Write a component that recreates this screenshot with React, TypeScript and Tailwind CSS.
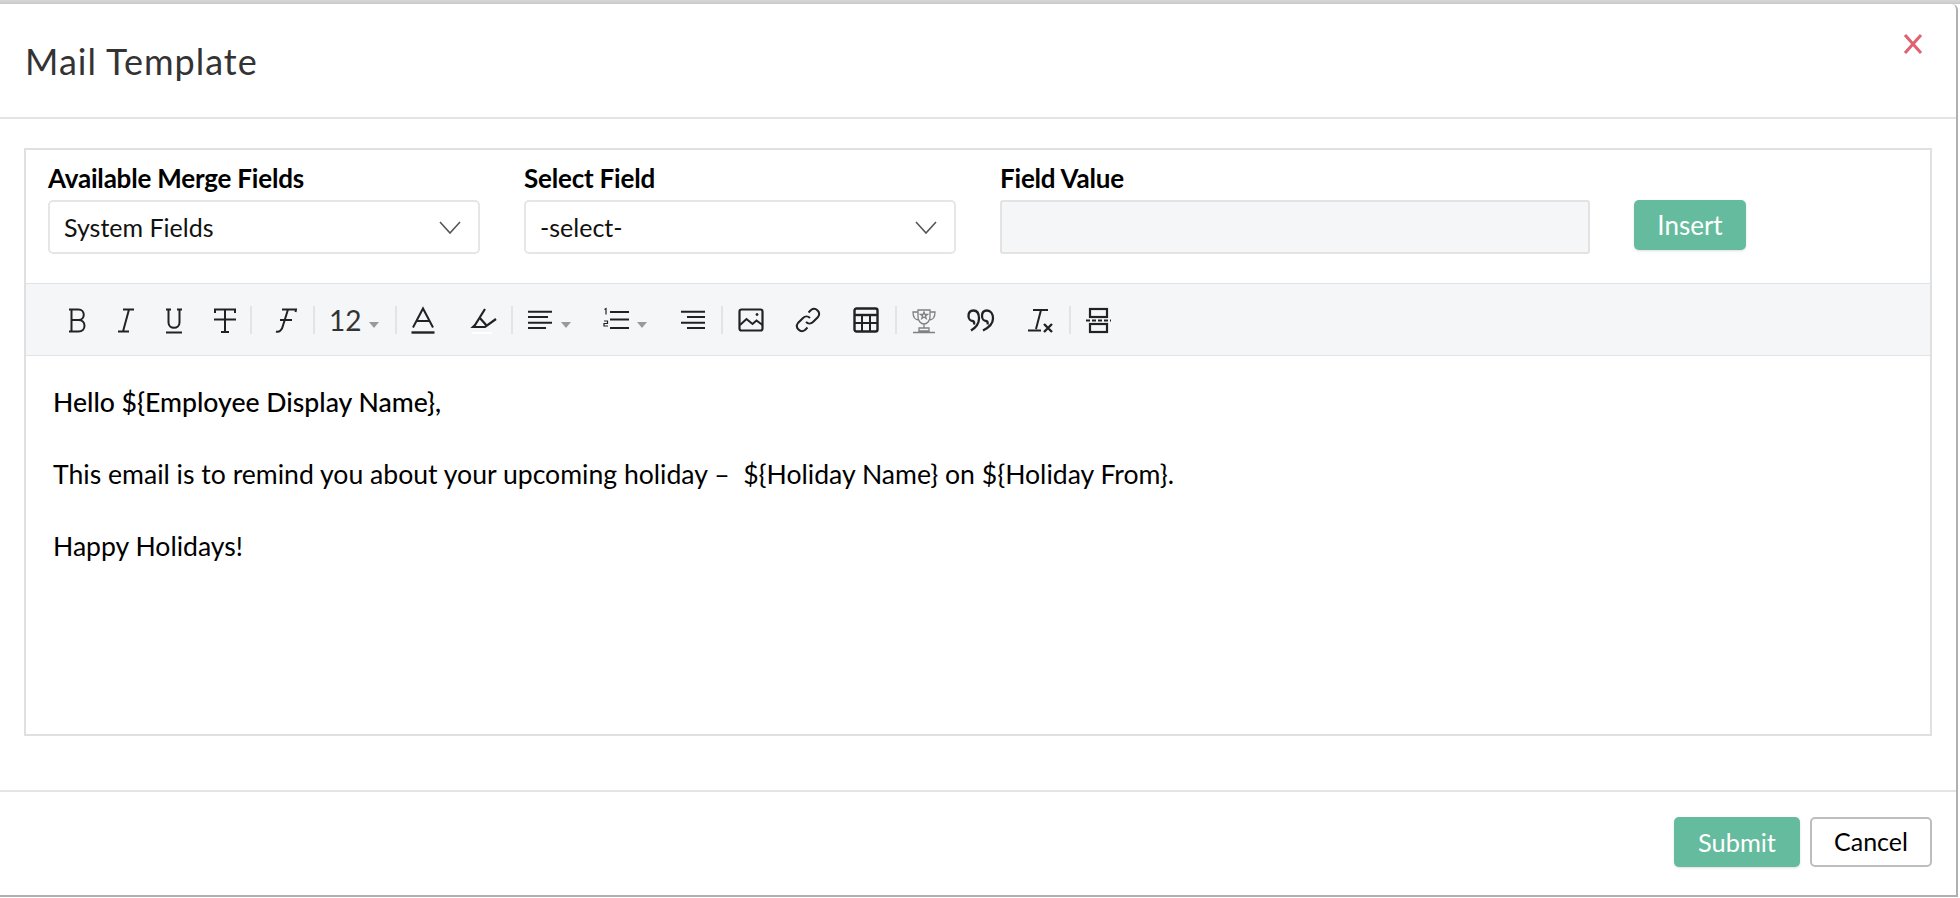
import type { ReactNode } from "react";

const Sep = () => <span className="w-[2px] h-[28px] bg-[#e3e4e7] shrink-0" />;

const Caret = () => (
    <svg width="10" height="6" viewBox="0 0 10 6" className="mt-[10px]">
        <path d="M0 0h10L5 6z" fill="#9a9a9a" />
    </svg>
);

function Icon({ children, className }: { children: ReactNode; className?: string }) {
    return (
        <svg width="28" height="28" viewBox="0 0 28 28" fill="none" stroke="#222" strokeWidth="2" className={className}>
            {children}
        </svg>
    );
}

function Toolbar() {
    return (
        <div className="h-[73px] bg-[#f5f6f8] border-y border-[#e2e3e5] flex items-center pl-[27px] text-[#333]">
            <div className="w-[48px] flex justify-center">
                <Icon>
                    <path d="M6 3.500h3M6 25.500h3M8.500 3.500v22M8.500 3.500h7c7 0 7 10.500 0 10.500h-7M15.500 14c8 0 8 11.500 0 11.500h-7" />
                </Icon>
            </div>
            <div className="w-[48px] flex justify-center">
                <Icon>
                    <path d="M12 3.500h11M7 25.500h11M18 3.500l-6 22" />
                </Icon>
            </div>
            <div className="w-[50px] flex justify-center">
                <Icon>
                    <path d="M6 3.500h5M17 3.500h5M8.500 3.500v13c0 7 11 7 11 0v-13M6 26.500h16" />
                </Icon>
            </div>
            <div className="w-[51px] flex justify-center">
                <Icon>
                    <path d="M4 7V3.500h20V7M3 13.500h22M14 3.500v22.500M10 26h8" />
                </Icon>
            </div>
            <Sep />
            <div className="w-[61px] flex justify-center pl-[5px]">
                <Icon>
                    <path d="M11 3.500h14l-.5 2.500M9 14h12M17 3.500l-5 16c-1 5-4 7-7 6" />
                </Icon>
            </div>
            <Sep />
            <div className="w-[80px] flex items-center pl-[14px] gap-[8px]">
                <span className="text-[28px] text-[#333] leading-none">12</span>
                <Caret />
            </div>
            <Sep />
            <div className="w-[52px] flex justify-center">
                <Icon>
                    <path d="M4 21.500L14 2.500l10 19M7.500 15h13" />
                    <path d="M2.500 26.500h23" strokeWidth="2.400" />
                </Icon>
            </div>
            <div className="w-[62px] flex justify-center pl-[8px]">
                <Icon>
                    <path d="M15 3L5 19l-2 2h12l11-8M9 11l8 9" strokeWidth="2.200" />
                    <path d="M2 27h20" stroke="#fff" strokeWidth="2" />
                </Icon>
            </div>
            <Sep />
            <div className="w-[88px] flex items-center pl-[13px] gap-[7px]">
                <Icon>
                    <path d="M2 5.700h24M2 11h20M2 16.700h24M2 22h18" />
                </Icon>
                <Caret />
            </div>
            <div className="w-[69px] flex items-center pl-[1px] gap-[7px]">
                <Icon>
                    <path d="M8 6h19M8 13.500h19M8 22h19" strokeWidth="2.200" />
                    <path d="M2.500 3.500l1.500-1v6M2 15h3.500v2.500H2v2.500h4" strokeWidth="1.200" />
                </Icon>
                <Caret />
            </div>
            <div className="w-[51px] flex justify-center pr-[5px]">
                <Icon>
                    <path d="M2 5.700h24M8 11h18M2 16.700h24M8 22h18" />
                </Icon>
            </div>
            <Sep />
            <div className="w-[56px] flex justify-center">
                <Icon>
                    <rect x="2.500" y="3.500" width="23" height="21" rx="2" strokeWidth="2.200" />
                    <path d="M3 19l6.500-6 6 5 4-3.500 6 4.500" />
                    <circle cx="20" cy="8.500" r="1" fill="#222" strokeWidth="1" />
                </Icon>
            </div>
            <div className="w-[58px] flex justify-center">
                <Icon>
                    <path d="M12 16a5 5 0 0 0 7 0l5-5a5 5 0 0 0-7-7l-2.500 2.500" />
                    <path d="M16 12a5 5 0 0 0-7 0l-5 5a5 5 0 0 0 7 7l2.500-2.500" />
                </Icon>
            </div>
            <div className="w-[58px] flex justify-center">
                <Icon>
                    <rect x="2.500" y="2.500" width="23" height="23" rx="2" strokeWidth="2.400" />
                    <path d="M3 9h22" strokeWidth="2.400" />
                    <path d="M3 17h22M10 9v16M18 9v16" />
                </Icon>
            </div>
            <Sep />
            <div className="w-[54px] flex justify-center">
                <Icon>
                    <g stroke="#808080" strokeWidth="1.300">
                        <path d="M8 4h12v7c0 4-3 7-6 7s-6-3-6-7zM8 6H3c0 5 2 8 6 8M20 6h5c0 5-2 8-6 8M14 18v4M9 22h10v3H9zM3 26.500h22" />
                        <path d="M14 6l1 2.500h2.500l-2 1.500.7 2.500-2.200-1.500-2.200 1.500.7-2.500-2-1.500H13z" />
                    </g>
                </Icon>
            </div>
            <div className="w-[60px] flex justify-center">
                <Icon>
                    <path d="M4 24.500c5-3 8-7 8-12 0-5-2-8-5.500-8-3 0-5 2-5 5.500 0 3 2 5 4 5 1.500 0 2 1.500 1.500 3.500" strokeWidth="2.300" />
                    <path d="M16 24.500c6-3 10-7 10-12 0-5-2.500-8-6-8-3 0-5 2-5 5.500 0 3 2 5 4 5 1.500 0 2 1.500 1.500 3.500" strokeWidth="2.300" />
                </Icon>
            </div>
            <div className="w-[58px] flex justify-center">
                <Icon>
                    <path d="M7 4h15M15 4l-5 19M2 24.500h13" />
                    <path d="M18 18l8 8M26 18l-8 8" strokeWidth="2.400" />
                </Icon>
            </div>
            <Sep />
            <div className="w-[54px] flex justify-center">
                <Icon>
                    <rect x="6" y="3" width="17" height="8" strokeWidth="2.200" />
                    <rect x="6" y="18" width="17" height="8" strokeWidth="2.200" />
                    <path d="M2 14.500h25" strokeDasharray="4 2" />
                </Icon>
            </div>
        </div>
    );
}

function Chevron() {
    return (
        <svg width="22" height="13" viewBox="0 0 22 13" fill="none" stroke="#555" strokeWidth="1.600">
            <path d="M1 1l10 11L21 1" />
        </svg>
    );
}

function Field({ label, value, className }: { label: string; value: string; className: string }) {
    return (
        <div className={className}>
            <label className="block text-[26px] leading-[28px] font-bold text-black mb-[8px] tracking-[-0.2px]">{label}</label>
            <div className="h-[54px] bg-white border-2 border-[#e6e6e6] rounded-[5px] flex items-center justify-between pl-[14px] pr-[17px]">
                <span className="text-[25px] text-[#111] mt-[1px]">{value}</span>
                <Chevron />
            </div>
        </div>
    );
}

export default function App() {
    return (
        <div className="w-[1960px] h-[898px] bg-white overflow-hidden font-['Lato',sans-serif]">
            <div className="h-[4px] bg-gradient-to-b from-[#d8d8d8] to-[#c8c8c8]" />
            <div className="w-[1958px] h-[893px] bg-white rounded-tr-[6px] border-r-2 border-b-2 border-[#b0b0b0] flex flex-col">
                <header className="relative h-[115px] border-b-2 border-[#e4e4e4] shrink-0 flex items-center pl-[25px]">
                    <h1 className="text-[36px] text-[#333] tracking-[1px] mt-[1px]">Mail Template</h1>
                    <svg width="20" height="20" viewBox="0 0 20 20" className="absolute right-[33px] top-[30px]">
                        <path d="M2 1l16 18M18 1L2 19" stroke="#e0616f" strokeWidth="3" />
                    </svg>
                </header>
                <div className="flex-1 pl-[24px] pr-[24px] pt-[29px]">
                    <div className="h-[588px] border-2 border-[#dfe0e1] flex flex-col">
                        <div className="h-[133px] flex pl-[22px] pt-[14px] shrink-0">
                            <Field label="Available Merge Fields" value="System Fields" className="w-[432px]" />
                            <Field label="Select Field" value="-select-" className="w-[432px] ml-[44px]" />
                            <div className="w-[590px] ml-[44px]">
                                <label className="block text-[26px] leading-[28px] font-bold text-black mb-[8px] tracking-[-0.2px]">Field Value</label>
                                <input disabled className="w-full h-[54px] bg-[#f5f6f8] border-2 border-[#e3e3e3] rounded-[3px]" />
                            </div>
                            <button className="ml-[44px] mt-[36px] w-[112px] h-[50px] bg-[#65bb9d] text-white text-[26px] rounded-[5px] shadow-sm">Insert</button>
                        </div>
                        <Toolbar />
                        <div className="flex-1 pl-[27px] pt-[28px] text-[26.6px] leading-[36px] text-black">
                            <p className="font-medium">Hello {"${Employee Display Name}"},</p>
                            <p className="mt-[36px]">This email is to remind you about your upcoming holiday –&nbsp; {"${Holiday Name}"} on {"${Holiday From}"}.</p>
                            <p className="mt-[36px]">Happy Holidays!</p>
                        </div>
                    </div>
                </div>
                <footer className="h-[105px] border-t-2 border-[#e4e4e4] flex justify-end items-start pt-[25px] pr-[24px] gap-[10px] shrink-0">
                    <button className="w-[126px] h-[50px] bg-[#65bb9d] text-white text-[25.400px] rounded-[5px] shadow-sm">Submit</button>
                    <button className="w-[122px] h-[50px] bg-white text-black text-[25px] border-2 border-[#bdbdbd] rounded-[5px]">Cancel</button>
                </footer>
            </div>
        </div>
    );
}
